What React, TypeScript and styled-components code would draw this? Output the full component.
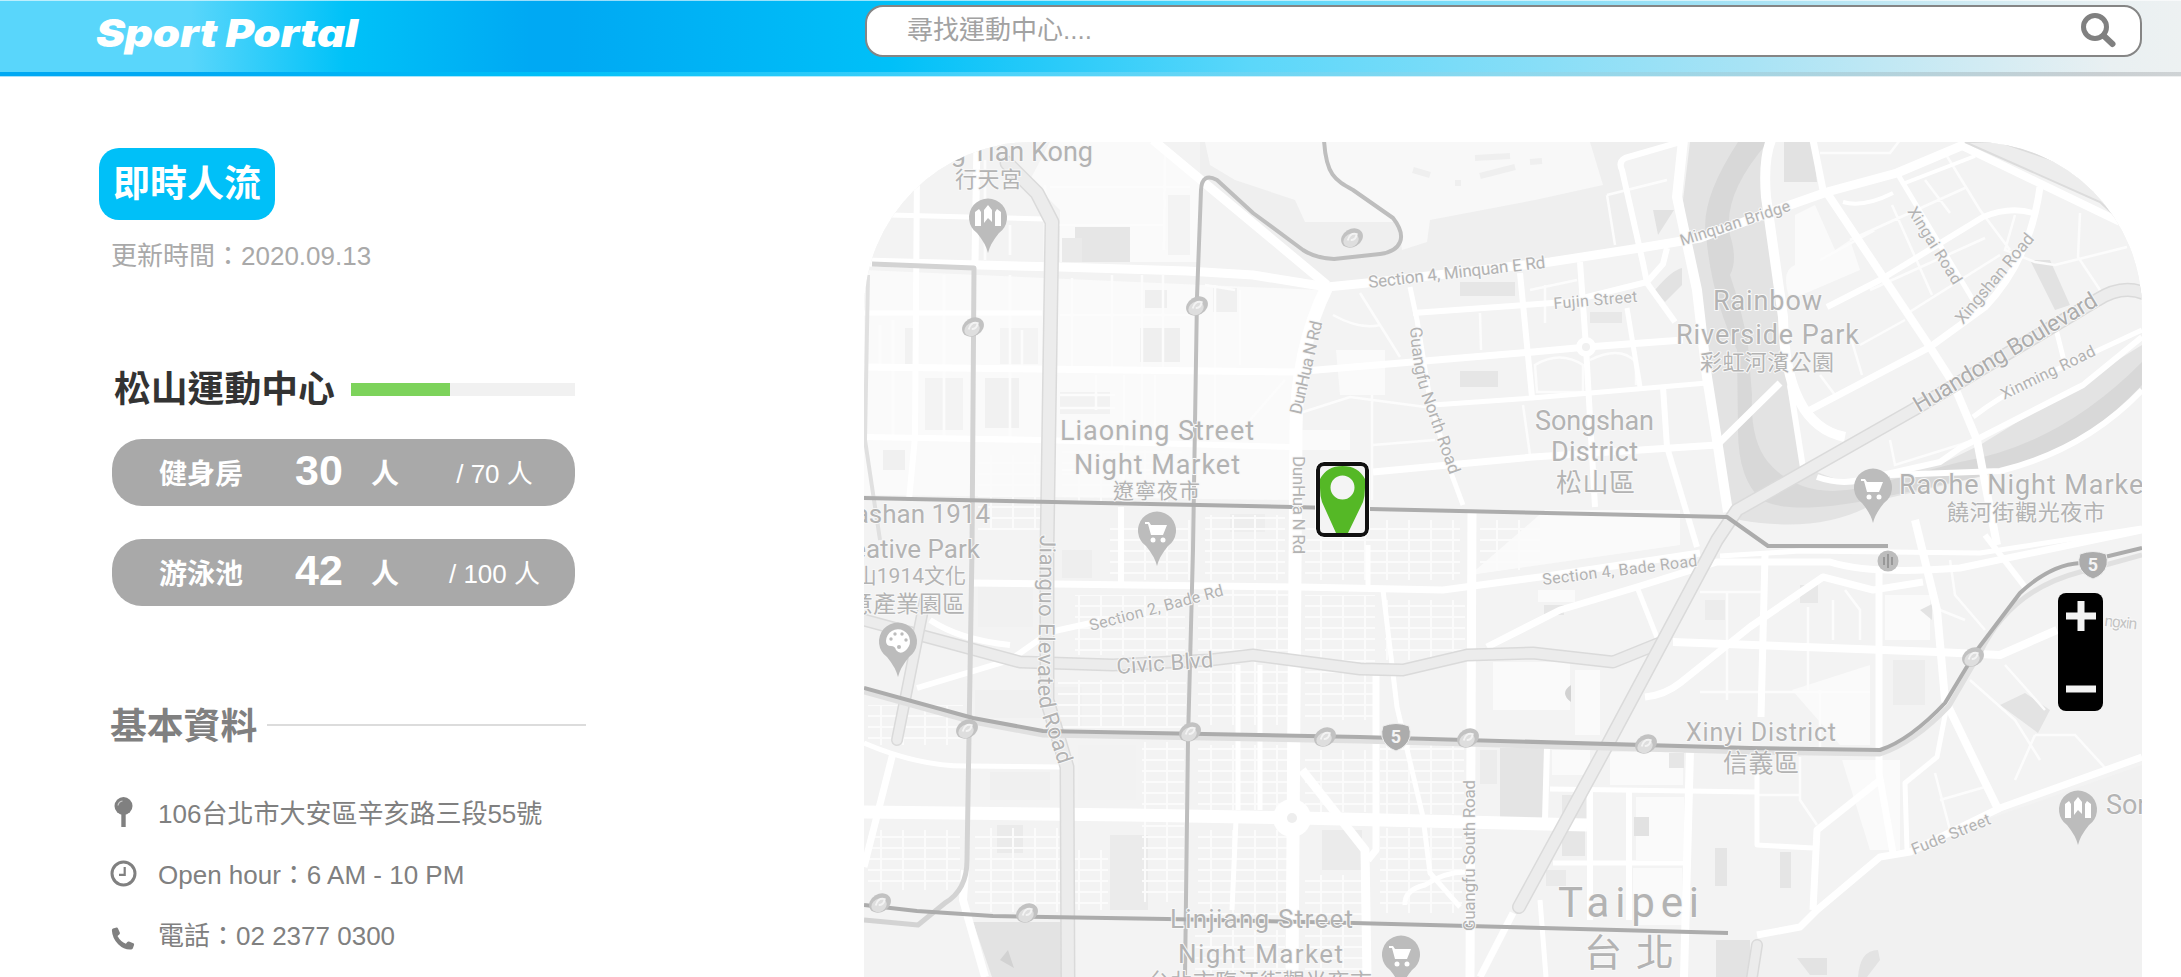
import React from 'react';
import styled, { createGlobalStyle } from 'styled-components';

const cjk = '"Liberation Sans", "Noto Sans CJK TC", sans-serif';

const GlobalStyle = createGlobalStyle`
  * { box-sizing: border-box; }
  body { margin: 0; background: #fff; font-family: ${cjk}; overflow: hidden; }
`;

const Page = styled.div`
  height: 977px;
  display: flex;
  flex-direction: column;
  overflow: hidden;
`;

const Header = styled.header`
  height: 77px;
  flex: none;
  display: flex;
  flex-direction: column;
  background: #fff;
`;

const HeaderBar = styled.div`
  height: 72px;
  display: flex;
  align-items: flex-start;
  padding: 5px 39px 0 96px;
  border-top: 1px solid rgba(255, 255, 255, 0.6);
  background: linear-gradient(90deg, #59d6fb 0, #59d6fb 190px, #00c2f8 345px, #00a9f3 530px, #00a9f3 570px, #00c0f8 890px, #5bd7fa 1250px, #a8e3f5 1750px, #e9f0f2 2110px, #edf1f2 100%);
`;

const HeaderRule = styled.div`
  height: 5px;
  border-bottom: 1px solid rgba(255, 255, 255, 0.65);
  background: linear-gradient(90deg, #00a9f3 0, #00a9f3 180px, #00c0f8 560px, #4cd3fa 1000px, #8bd9ef 1500px, #c9cfd2 2100px, #cfd3d5 100%);
`;

const Logo = styled.h1`
  margin: 4px 101px 0 0;
  width: 668px;
  font: italic 900 38px/46px Inter, "Liberation Sans", sans-serif;
  letter-spacing: -0.2px;
  color: #fff;
  transform: scaleX(1.15);
  transform-origin: left center;
`;

const SearchBox = styled.label`
  flex: 1;
  height: 52px;
  margin-top: -1px;
  display: flex;
  align-items: center;
  padding: 0 24px 0 40px;
  border: 2px solid #858585;
  border-radius: 18px;
  background: #fff;
`;

const SearchInput = styled.input`
  flex: 1;
  height: 40px;
  margin-top: -2px;
  padding: 0;
  border: 0;
  outline: 0;
  background: transparent;
  font: 26px/40px ${cjk};
  &::placeholder { color: #a2a2a2; opacity: 1; }
`;

const Main = styled.main`
  flex: 1;
  min-height: 0;
  display: flex;
  padding: 65px 39px 0 99px;
`;

const Sidebar = styled.aside`
  width: 765px;
  flex: none;
  padding-top: 6px;
`;

const Badge = styled.h2`
  margin: 0;
  width: 176px;
  height: 72px;
  border-radius: 20px;
  background: #00c0f8;
  color: #fff;
  font: 700 37px/74px ${cjk};
  text-align: center;
`;

const Updated = styled.p`
  margin: 16px 0 0 12px;
  font-size: 26px;
  line-height: 40px;
  color: #a9a9a9;
`;

const CenterRow = styled.div`
  display: flex;
  align-items: center;
  margin: 89px 0 0 15px;
  height: 50px;
`;

const CenterName = styled.h3`
  margin: 0;
  width: 237px;
  font: 700 36.8px/52px ${cjk};
  color: #333;
`;

const Progress = styled.div`
  width: 224px;
  height: 13px;
  margin-top: -2px;
  background: #f1f1f1;
`;

const ProgressFill = styled.div<{ $percent: number }>`
  width: ${(p) => p.$percent}%;
  height: 100%;
  background: #7dd35b;
`;

const CrowdCard = styled.div`
  display: flex;
  align-items: center;
  width: 463px;
  height: 67px;
  margin: 24px 0 33px 13px;
  padding-left: 47px;
  border-radius: 30px;
  background: #a9a9a9;
  color: #fff;
  & + & { margin-top: 0; }
`;

const Facility = styled.span`
  width: 136px;
  margin-top: -2px;
  font-size: 28px;
  font-weight: 700;
`;

const Count = styled.strong`
  width: 76px;
  font-size: 43px;
  line-height: 60px;
  margin-top: -5px;
`;

const Unit = styled.span`
  width: 55px;
  margin-top: -2px;
  font-size: 28px;
  font-weight: 700;
`;

const Capacity = styled.span`
  width: 137px;
  margin-top: -3px;
  text-align: center;
  font-size: 26px;
`;

const InfoHead = styled.div`
  display: flex;
  align-items: center;
  margin: 95px 0 0 11px;
  height: 52px;
`;

const InfoTitle = styled.h3`
  margin: 0;
  width: 157px;
  font: 700 36.8px/52px ${cjk};
  color: #808080;
`;

const Rule = styled.div`
  width: 319px;
  height: 2px;
  margin-top: -4px;
  background: #dcdcdc;
`;

const InfoList = styled.ul`
  margin: 28px 0 0 11px;
  padding: 0;
  list-style: none;
`;

const InfoItem = styled.li`
  display: flex;
  align-items: center;
  height: 61px;
  font-size: 26px;
  color: #808080;
`;

const IconSlot = styled.span<{ $drop?: number }>`
  width: 48px;
  height: 30px;
  display: flex;
  margin-top: ${(p) => p.$drop ?? 0}px;
`;

const MapFrame = styled.section`
  position: relative;
  width: 1278px;
  height: 835px;
  overflow: hidden;
  border-radius: 168px 168px 0 0;
  background: #f3f3f3;
`;

const MapMarker = styled.button`
  position: absolute;
  left: 452px;
  top: 320px;
  width: 53px;
  height: 75px;
  padding: 0;
  display: flex;
  border: 4px solid #111;
  border-radius: 8px;
  outline: 1px solid #fff;
  background: #f4f4f4;
`;

const ZoomControl = styled.div`
  position: absolute;
  left: 1194px;
  top: 451px;
  width: 45px;
  height: 118px;
  display: flex;
  flex-direction: column;
  justify-content: space-between;
  align-items: center;
  padding: 7px 0;
  border-radius: 8px;
  background: #000;
`;

const GlyphSvg = styled.svg`
  display: block;
`;

const SearchGlyph = () => (
  <GlyphSvg width="36" height="36" viewBox="0 0 36 36">
    <circle cx="15" cy="14" r="11.5" fill="none" stroke="#808080" strokeWidth="5" />
    <path d="M23.5 22.5 32.500 31" stroke="#808080" strokeWidth="6" strokeLinecap="round" />
  </GlyphSvg>
);

const PinGlyph = () => (
  <GlyphSvg width="27" height="30" viewBox="0 0 27 30">
    <circle cx="13.5" cy="9" r="9" fill="#808080" />
    <rect x="11.3" y="17" width="4.4" height="13" fill="#808080" />
    <path d="M8 8.5a5.5 5.5 0 0 1 4.5-4.5" stroke="#c8c8c8" strokeWidth="1.2" fill="none" />
  </GlyphSvg>
);

const ClockGlyph = () => (
  <GlyphSvg width="27" height="27" viewBox="0 0 27 27">
    <circle cx="13.5" cy="13.5" r="11.5" fill="none" stroke="#808080" strokeWidth="3" />
    <path d="M14.7 7v7.8H9" fill="none" stroke="#808080" strokeWidth="2.2" />
  </GlyphSvg>
);

const PhoneGlyph = () => (
  <GlyphSvg width="26" height="24" viewBox="0 0 26 24">
    <path
      d="M3 1.5 6.6.6Q7.6.5 8 1.4L9.9 5.700Q10.100 6.700 9.300 7.400L7.500 8.900Q10.600 14.600 15.900 16.700L17.300 15.100Q18 14.300 19 14.600L23.300 16.300Q24.300 16.800 24.100 17.700L23 21.100Q22.600 22.300 21.300 22.500 14.300 23.200 8.200 17.200 2.300 11.300 1.900 3.500 1.800 1.900 3 1.500Z"
      fill="#808080"
    />
  </GlyphSvg>
);

type Road = [string, number];

const streets: Road[] = [
  ['M864 262 L1060 267 L1187 271 L1253 275 L1327 287 L1367 283 L1550 262 L1640 248 L1700 238 L1790 205 L1827 192 L1897 173 L1975 140', 9],
  ['M1153 140 L1327 285', 9],
  ['M1327 287 Q1296 350 1296 430 L1292 977', 13],
  ['M864 367 L1293 372 L1533 352 L1587 347 L1683 340', 7],
  ['M864 437 L1040 440 L1292 447', 6],
  ['M864 313 H1042', 5],
  ['M890 215 L1044 219', 5],
  ['M917 170 L915 437 L909 500', 6],
  ['M977 140 L975 262', 7],
  ['M1373 472 L1533 457 L1717 445 L1780 383', 7],
  ['M1433 405 L1532 398 L1707 383', 5],
  ['M1413 313 L1567 302 L1647 282 L1663 264 L1667 248', 6],
  ['M1520 273 L1532 397', 6],
  ['M1580 262 L1586 347 L1595 507', 6],
  ['M1627 308 L1640 387', 5],
  ['M1663 387 L1667 447 L1697 547', 6],
  ['M1680 142 L1625 158 Q1618 162 1622 170 L1643 263 L1647 283 L1675 322', 6],
  ['M1410 287 L1417 320 L1430 400 L1450 470 L1463 505', 5],
  ['M1683 140 L1677 197 L1697 290 L1707 377 L1717 440 L1728 512', 10],
  ['M1827 193 L1930 347 L1953 383 L1977 440 L1987 493 L1997 545', 8],
  ['M1771 140 Q1763 160 1766 197 L1783 317 Q1785 425 1845 437', 10],
  ['M1790 385 L1803 468', 6],
  ['M1813 140 L1823 190', 7],
  ['M1810 410 L1930 347 L1985 307 Q2030 260 2040 187', 7],
  ['M1827 307 L1880 280 L1983 217 Q2010 206 2033 213', 6],
  ['M1897 173 L1973 300', 5],
  ['M1905 183 L1975 156', 4],
  ['M1843 202 Q1863 208 1893 193', 4],
  ['M1960 145 L2120 222', 8],
  ['M1973 417 Q2005 392 2045 375 L2142 330', 5],
  ['M1817 477 Q1840 485 1860 480 L1940 462 L1960 448 L2083 385 L2142 337', 6],
  ['M1890 475 L2000 471 Q2085 450 2142 390', 6],
  ['M2055 325 L2065 365', 5],
  ['M864 812 L1130 815 L1300 818 L1587 825', 13],
  ['M970 583 L1300 587 L1443 590 L1540 577 L1700 553', 7],
  ['M1472 510 L1470 977', 9],
  ['M1121 507 V583', 6],
  ['M1487 647 L1560 610 L1637 587 L1717 562 H1830 Q1870 575 1960 568 L2142 530', 7],
  ['M1720 556 L1800 551 L1980 553 L2142 528', 5],
  ['M1376 675 V850 L1368 860', 7],
  ['M1368 545 V587', 5],
  ['M1383 590 L1397 707 L1423 817 L1430 873 L1460 907', 5],
  ['M1302 770 L1365 850 L1367 977', 9],
  ['M1238 665 V810 M1260 665 V810 M1236 820 L1232 910', 5],
  ['M1547 747 L1545 820', 6],
  ['M1550 789 L1757 792', 5],
  ['M1553 863 H1683', 5],
  ['M1590 789 V920 M1629 789 V920', 6],
  ['M1690 750 L1684 977', 8],
  ['M1637 587 L1658 640', 5],
  ['M1645 697 Q1665 695 1680 683 L1750 627 L1823 577 L1873 590 L1923 582', 7],
  ['M1673 642 L1937 652 L2000 655 L2057 630', 8],
  ['M1765 555 L1761 717', 7],
  ['M1879 567 L1879 773 L1893 853', 7],
  ['M1915 520 L1937 610 L1945 700 L1997 807', 8],
  ['M1985 535 L2025 587', 6],
  ['M1948 700 L1937 757 L1905 783 L1907 850', 5],
  ['M2142 757 L2000 808 L1910 852 L1880 857 L1817 910 L1800 927 L1757 935', 7],
  ['M1880 780 L1817 830 L1813 910', 7],
  ['M1757 757 L1757 845 L1813 848', 5],
  ['M1513 913 L1480 977', 7],
  ['M965 870 L963 900 L985 977', 8],
  ['M893 753 L864 867', 7],
  ['M864 743 Q920 767 970 766 L1060 767', 5],
  ['M917 688 L1010 660 L1050 632 L1100 621', 6],
  ['M930 620 Q960 640 1010 645', 6],
  ['M1405 905 Q1404 890 1425 885 Q1445 872 1465 872', 5],
  ['M1540 900 L1546 977', 5],
];

const lanes =
  'M1892 205 L1932 295 M1925 180 L1950 213 M1945 153 L1980 210 L2010 250 M1850 240 L1965 188 M1870 290 L1985 238 M1908 313 L2000 255 M1820 260 L1875 230 ' +
  'M1850 335 L1862 375 M1820 375 L1835 395 M1860 345 L1905 320 M2015 215 L2005 250 L2035 262 L2055 265 L2127 247 M2080 213 L2078 257 L2100 290 ' +
  'M1820 153 H1890 L1900 140 M1607 195 L1667 180 M1607 195 L1615 245 M1360 293 L1400 357 M1333 315 Q1360 330 1380 325 M1480 313 L1481 350 M1372 395 V500 M1300 413 L1350 397 L1433 408 ' +
  'M1523 405 L1530 455 M1545 285 V323 M1530 290 L1577 280 M1373 445 L1435 440 M1535 365 Q1560 350 1583 365 V392 H1537 Z M1590 360 Q1620 345 1636 362 V385 M1890 440 L1895 465 L1975 440 ' +
  'M1700 592 H1765 M1727 592 V700 M1700 692 H1870 M1808 607 V690 M1833 600 V640 M1845 590 L1860 610 V640 M1820 690 V750 M1950 560 L1955 595 L1985 630 M1970 680 L2015 720 L2040 760 M2005 665 L2045 710 M2035 735 H2075 L2107 770 M2035 735 L2015 780 ' +
  'M1940 800 L1985 787 M1940 610 L1965 620 M1935 773 L1950 830 M1800 757 V800 L1817 825 M1758 795 H1800 M1045 185 V280 M1165 150 L1164 250 M1050 225 H1165 M1050 187 H1190 M985 160 V260 M1010 225 V255 ' +
  'M880 325 V367 M893 320 V437 M944 275 V437 M1010 275 V437 M1022 330 V367 M1072 278 V367 M1112 275 V370 M1142 275 V440 M1163 275 V370 M1215 285 V440 M1240 290 V365 M1060 315 H1190 M1060 395 H1115 M1060 408 H1115 M1096 375 V410 M1124 375 V505 M1155 375 V440 M1205 285 L1235 290 M1250 420 L1285 380 M1062 470 H1190';

const blocks: [number, number, number, number, string][] = [
  [1075, 227, 55, 35, '#e6e6e6'], [1062, 238, 20, 24, '#eaeaea'], [1145, 290, 22, 18, '#efefef'],
  [1140, 328, 40, 34, '#efefef'], [1213, 288, 24, 24, '#f0f0f0'], [925, 378, 38, 52, '#f3f3f3'],
  [985, 378, 34, 50, '#f1f1f1'], [1000, 328, 38, 36, '#f4f4f4'], [905, 328, 10, 36, '#f2f2f2'],
  [883, 450, 22, 20, '#f0f0f0'], [1060, 392, 50, 22, '#f2f2f2'], [1168, 195, 22, 60, '#f3f3f3'],
  [1460, 282, 55, 14, '#e6e6e6'], [1460, 371, 38, 16, '#e6e6e6'], [1590, 312, 32, 11, '#e8e8e8'],
  [1230, 514, 35, 18, '#eeeeee'], [1062, 550, 30, 28, '#eeeeee'], [978, 585, 55, 42, '#f1f1f1'],
  [975, 690, 68, 28, '#f0f0f0'], [1050, 687, 32, 42, '#f1f1f1'], [990, 772, 60, 28, '#f0f0f0'],
  [1078, 745, 58, 55, '#f2f2f2'], [1110, 835, 38, 75, '#ebebeb'], [997, 825, 26, 28, '#ebebeb'],
  [1322, 830, 40, 40, '#ebebeb'], [1500, 748, 44, 70, '#e4e4e4'], [1480, 750, 17, 34, '#ececec'],
  [1562, 795, 24, 26, '#e8e8e8'], [1562, 831, 23, 25, '#e6e6e6'], [1669, 753, 15, 15, '#e6e6e6'],
  [1634, 817, 15, 19, '#e2e2e2'], [1715, 848, 12, 38, '#e5e5e5'], [1780, 852, 11, 36, '#e5e5e5'],
  [1716, 940, 34, 37, '#e3e3e3'], [1544, 605, 20, 10, '#e6e6e6'], [1893, 660, 32, 45, '#ededed'],
  [1800, 585, 18, 18, '#e8e8e8'], [1705, 600, 20, 20, '#ececec'], [1546, 870, 20, 16, '#eaeaea'],
];

const grids: [number, number, number, number][] = [
  [1058, 680, 128, 48], [1142, 742, 42, 160], [868, 830, 92, 60], [975, 828, 88, 84], [1072, 850, 36, 60],
  [1198, 590, 90, 135], [1198, 745, 90, 65], [1198, 830, 90, 85], [1305, 595, 70, 125], [1305, 750, 68, 62],
  [1380, 740, 84, 74], [1385, 600, 80, 60], [1380, 828, 82, 85], [868, 705, 95, 40], [978, 455, 64, 75],
  [1062, 450, 120, 52], [1305, 520, 155, 60], [1110, 520, 80, 60], [1205, 515, 80, 65], [1305, 875, 60, 95], [1075, 595, 110, 60],
  [1480, 520, 60, 50], [1195, 930, 90, 45],
];

const stations: [number, number][] = [
  [973, 327], [1197, 306], [1352, 238], [967, 729], [1190, 732], [1325, 737],
  [1468, 738], [1646, 744], [1973, 657], [880, 903], [1027, 913],
];

interface LabelSpec {
  t: string;
  x: number;
  y: number;
  s: number;
  w?: number;
  r?: number;
  end?: boolean;
  c?: string;
}

const labels: LabelSpec[] = [
  { t: 'Hsing Tian Kong', x: 1093, y: 161, s: 27, end: true },
  { t: '行天宮', x: 955, y: 187, s: 22, w: 67 },
  { t: 'Liaoning Street', x: 1060, y: 440, s: 27, w: 194 },
  { t: 'Night Market', x: 1074, y: 474, s: 27, w: 166 },
  { t: '遼寧夜市', x: 1113, y: 498, s: 21, w: 87 },
  { t: 'Huashan 1914', x: 990, y: 523, s: 26, end: true },
  { t: 'Creative Park', x: 980, y: 558, s: 26, end: true },
  { t: '華山1914文化', x: 966, y: 583, s: 21, end: true },
  { t: '創意產業園區', x: 965, y: 612, s: 23, end: true },
  { t: 'Songshan', x: 1535, y: 430, s: 27, w: 119 },
  { t: 'District', x: 1551, y: 461, s: 27, w: 87 },
  { t: '松山區', x: 1556, y: 492, s: 26, w: 79 },
  { t: 'Rainbow', x: 1713, y: 310, s: 27, w: 109 },
  { t: 'Riverside Park', x: 1676, y: 344, s: 27, w: 183 },
  { t: '彩虹河濱公園', x: 1700, y: 370, s: 22, w: 134 },
  { t: 'Raohe Night Market', x: 1899, y: 494, s: 27, w: 254 },
  { t: '饒河街觀光夜市', x: 1947, y: 520, s: 22, w: 158 },
  { t: 'Linjiang Street', x: 1170, y: 928, s: 26, w: 183 },
  { t: 'Night Market', x: 1178, y: 963, s: 26, w: 165 },
  { t: '台北市臨江街觀光夜市', x: 1148, y: 989, s: 22, w: 224 },
  { t: 'Taipei', x: 1558, y: 917, s: 42, w: 141 },
  { t: '台北', x: 1584, y: 966, s: 38, w: 90 },
  { t: 'Xinyi District', x: 1686, y: 741, s: 25, w: 150 },
  { t: '信義區', x: 1723, y: 772, s: 25, w: 76 },
  { t: 'Civic Blvd', x: 1117, y: 674, s: 22, w: 97, r: -4 },
  { t: 'Section 2, Bade Rd', x: 1091, y: 631, s: 16, w: 138, r: -15 },
  { t: 'Section 4, Bade Road', x: 1543, y: 585, s: 16, w: 156, r: -7 },
  { t: 'Section 4, Minquan E Rd', x: 1369, y: 288, s: 17, w: 178, r: -6.5 },
  { t: 'Fujin Street', x: 1554, y: 309, s: 16, w: 84, r: -5 },
  { t: 'Minquan Bridge', x: 1682, y: 246, s: 16, w: 115, r: -18 },
  { t: 'Xingai Road', x: 1907, y: 211, s: 16, w: 88, r: 58 },
  { t: 'Xingshan Road', x: 1963, y: 325, s: 17, w: 112, r: -50 },
  { t: 'Huandong Boulevard', x: 1919, y: 413, s: 23, w: 210, r: -31, c: '#acacac' },
  { t: 'Xinming Road', x: 2004, y: 400, s: 16, w: 103, r: -26 },
  { t: 'Fude Street', x: 1914, y: 855, s: 16, w: 84, r: -22 },
  { t: 'DunHua N Rd', x: 1301, y: 415, s: 17, w: 95, r: -77 },
  { t: 'DunHua N Rd', x: 1293, y: 456, s: 17, w: 98, r: 90 },
  { t: 'Guangfu South Road', x: 1475, y: 931, s: 17, w: 151, r: -90 },
  { t: 'ngxin', x: 2104, y: 626, s: 16, w: 33, r: 6, c: '#c4c4c4' },
  { t: 'Songshan', x: 2106, y: 814, s: 27, w: 119 },
];

const MapText = styled.text`
  font-family: Roboto, "Noto Sans CJK TC", sans-serif;
  fill: #b3b3b3;
  stroke: #f8f8f8;
  stroke-width: 2px;
  stroke-linejoin: round;
  paint-order: stroke;
`;

const Label = ({ t, x, y, s, w, r, end, c }: LabelSpec) => (
  <MapText
    x={x}
    y={y}
    fontSize={s}
    textLength={w}
    textAnchor={end ? 'end' : 'start'}
    transform={r ? `rotate(${r} ${x} ${y})` : undefined}
    style={c ? { fill: c } : undefined}
  >
    {t}
  </MapText>
);

type PoiKind = 'temple' | 'cart' | 'art';

const Poi = ({ x, y, kind }: { x: number; y: number; kind: PoiKind }) => (
  <g transform={`translate(${x} ${y})`}>
    <path d="M0 36 Q-2 27-11 16 A19 19 0 1 1 11 16 Q2 27 0 36Z" fill="#bcbcbc" />
    {kind === 'temple' && (
      <path d="M-13-5 L-9-8 L-7-5 V9 H-13Z M7-5 L9-8 L13-5 V9 H7Z M-4-7 L0-12 L4-7 V5 L0 1 L-4 6Z" fill="#fff" />
    )}
    {kind === 'cart' && (
      <g fill="#fff">
        <path d="M-12-8 H-8 L-6-5 H10 L6 5 H-6 L-9-6 H-12Z" />
        <circle cx="-4" cy="10" r="2.500" />
        <circle cx="6" cy="10" r="2.500" />
      </g>
    )}
    {kind === 'art' && (
      <g>
        <path d="M-12 0 A12 12 0 1 1 7 10 Q2 14-2 9 Q-3 5-7 5 Q-12 5-12 0Z" fill="#fff" />
        <g fill="#bcbcbc">
          <circle cx="-7" cy="-2" r="1.700" />
          <circle cx="-3" cy="-7" r="1.700" />
          <circle cx="4" cy="-7" r="1.700" />
          <circle cx="8" cy="-1" r="1.700" />
          <circle cx="1" cy="6" r="2" />
        </g>
      </g>
    )}
  </g>
);

const Shield = ({ x, y }: { x: number; y: number }) => (
  <g transform={`translate(${x} ${y})`}>
    <path d="M-13-10 Q0-15 13-10 Q15-4 14 1 Q11 11 0 15 Q-11 11-14 1 Q-15-4-13-10Z" fill="#acacac" stroke="#efefef" strokeWidth="1" />
    <text x="0" y="7" fontFamily="Roboto" fontWeight="700" fontSize="18" textAnchor="middle" fill="#f4f4f4">5</text>
  </g>
);

const Elevated = ({ d, w }: { d: string; w: number }) => (
  <g fill="none" strokeLinejoin="round" strokeLinecap="round">
    <path d={d} stroke="#dadada" strokeWidth={w} />
    <path d={d} stroke="#ececec" strokeWidth={w - 3} />
  </g>
);

const CityMap = () => (
  <GlyphSvg width="1278" height="835" viewBox="864 142 1278 835">
    <defs>
      <pattern id="lanes" width="22" height="11" patternUnits="userSpaceOnUse">
        <path d="M0 1 H22 M1 0 V11" stroke="#fbfbfb" strokeWidth="2" />
      </pattern>
      <path id="jianguo" d="M1040 535 L1038 690 Q1039 710 1047 730 L1062 775" />
      <path id="guangfu" d="M1410 327 Q1413 375 1425 405 L1455 490" />
    </defs>
    <rect x="864" y="142" width="1278" height="835" fill="#f3f3f3" />
    <path d="M1050 142 H1153 L1200 182 V262 H1060 V210 L1030 180Z M864 270 L1320 290 L1296 400 V500 L864 495Z" fill="#fafafa" />
    <path d="M1200 142 H1680 L1620 160 L1640 250 L1367 281 L1325 283 L1200 180Z" fill="#efefef" />
    <path d="M1205 142 H1590 L1603 185 L1535 200 L1430 220 L1427 242 L1402 250 L1398 222 H1305 L1295 200 L1235 180 L1210 165Z" fill="#f8f8f8" />
    <path d="M1413 170 L1430 175 M1475 158 L1510 156 M1480 176 L1515 167 M1530 162 L1542 161 M1455 183 h6" stroke="#efefef" strokeWidth="6" />
    <path d="M1545 510 H1680 V545 L1470 575Z M1493 662 H1570 V710 H1493Z M1575 670 H1600 V735 H1575Z M1552 750 H1590 V775 H1552Z M1610 752 H1683 V785 H1610Z M1636 797 H1684 V860 H1636Z M1633 868 H1682 V925 H1633Z M1538 590 H1575 V602 H1538Z M1885 595 H1930 V640 H1885Z M1792 690 L1870 665 V745 L1840 745Z M1842 760 L1900 760 V850 L1870 850Z M1336 350 H1385 V395 H1340Z M1300 430 H1350 V450 H1300Z" fill="#fafafa" />
    <path d="M1795 215 L1815 205 L1835 250 L1850 240 L1860 270 L1790 300 Q1780 270 1795 265Z" fill="#fafafa" />
    <path d="M1757 935 L1800 927 L1880 857 L2142 765 V977 H1757Z" fill="#f1f1f1" />

    <path d="M1690 142 H1767 L1763 190 L1783 317 L1787 385 L1802 465 Q1860 495 1890 472 L1945 462 L1980 445 L2142 345 V392 Q2090 445 2010 470 L1880 500 Q1825 535 1740 520 L1730 510 L1712 400 L1695 280 L1683 200Z" fill="#e3e3e3" />
    <path d="M1738 142 H1768 Q1722 195 1730 235 Q1738 260 1730 275 Q1742 310 1748 345 L1752 395 Q1750 440 1768 462 Q1800 500 1860 488 L1960 462 Q2060 445 2142 362 V385 Q2080 450 2010 470 L1870 500 Q1790 515 1762 500 Q1738 480 1738 430 L1737 350 Q1712 300 1706 235 Q1700 200 1738 142Z" fill="#d8d8d8" />
    <path d="M1784 142 H1812 L1817 182 H1784Z M1653 210 H1674 L1658 235Z M1655 290 Q1672 270 1682 268 V285 L1665 302Z M2030 260 H2050 L2070 305 L2055 310Z" fill="#e2e2e2" />

    {blocks.map(([x, y, w, h, fill]) => (
      <rect key={`${x}-${y}`} x={x} y={y} width={w} height={h} fill={fill} />
    ))}
    <path d="M973 922 H1062 V977 H992Z M2000 705 L2025 693 L2050 710 L2038 733Z M1920 610 L1932 604 V620Z M1797 958 H1827 V975 H1810Z M1858 977 Q1860 950 1878 950 L1880 960 L1867 977Z" fill="#e3e3e3" />
    <path d="M1571 685 Q1559 693 1571 702Z M1000 960 L1008 950 L1014 968Z" fill="#d2d2d2" />
    {grids.map(([x, y, w, h]) => (
      <rect key={`${x}-${y}`} x={x} y={y} width={w} height={h} fill="url(#lanes)" />
    ))}

    <path d={lanes} fill="none" stroke="#fcfcfc" strokeWidth="2.500" />
    <g fill="none" stroke="#fff" strokeLinejoin="round">
      {streets.map(([d, w]) => (
        <path key={d} d={d} strokeWidth={w} />
      ))}
    </g>
    <circle cx="1292" cy="818" r="19" fill="#fff" />
    <circle cx="1292" cy="818" r="5" fill="#eeeeee" />
    <circle cx="1586" cy="347" r="10" fill="#fff" />
    <circle cx="1586" cy="347" r="4" fill="#f1f1f1" />

    <path d="M1965 142 L2100 202 L2112 213 L2128 230 L2110 180 L2000 142Z" fill="#ededed" stroke="#dcdcdc" strokeWidth="2" />
    <Elevated d="M864 620 L927 637 L1020 662 L1113 665 L1210 660 L1253 655 L1360 669 L1403 670 L1467 655 L1533 653 L1613 662 L1660 643" w={13} />
    <Elevated d="M925 600 L897 740" w={12} />
    <Elevated d="M1007 163 L1037 193 L1052 222 L1047 550 L1047 700 L1067 767 L1068 990" w={15} />
    <Elevated d="M2150 296 Q2125 282 2097 300 L1913 410 L1737 510 L1717 540 L1610 740 L1519 907" w={14} />
    <Elevated d="M1750 990 L1757 945" w={12} />

    <g fill="none" strokeLinejoin="round">
      <path d="M872 264 L974 268 L972 550 L967 860 Q967 890 945 903 L918 925 L864 920" stroke="#d3d3d3" strokeWidth="5" />
      <path d="M868 275 L865 440 L880 540" stroke="#e0e0e0" strokeWidth="4" />
      <path d="M1324 140 C1326 175 1335 180 1353 190 L1393 218 Q1404 232 1400 242 Q1396 252 1380 254 L1334 259 Q1315 258 1303 250 L1253 213 L1217 180 Q1202 172 1201 190 L1197 297 L1193 550 L1188 740 L1185 977" stroke="#bebebe" strokeWidth="4" />
      <path d="M864 692 L973 722 L1043 735 L1360 741 L1750 752 L1880 754 Q1915 742 1949 706 L1980 653 Q2010 590 2080 572 L2142 555" stroke="#e0e0e0" strokeWidth="5" />
      <g stroke="#acacac" strokeWidth="4">
        <path d="M864 498 L1293 507 L1370 509 L1727 517 L1768 546 L1888 546" />
        <path d="M864 688 L973 718 L1043 731 L1360 737 L1750 748 L1880 750 Q1910 740 1945 703 L1977 650 L2020 593 Q2050 565 2080 563 L2142 548" />
        <path d="M864 905 L917 911 L993 916 L1167 919 L1353 923 L1728 933" />
      </g>
    </g>

    {stations.map(([x, y]) => (
      <g key={`${x}-${y}`} transform={`translate(${x} ${y}) rotate(-30)`}>
        <ellipse rx="11.500" ry="9" fill="#c2c2c2" />
        <ellipse cx="-2" cy="1.500" rx="8" ry="6.500" fill="#dedede" />
        <path d="M-5 0 Q1-6 6-1 Q2 4-2 1" fill="none" stroke="#f3f3f3" strokeWidth="2" />
      </g>
    ))}
    <circle cx="1888" cy="561" r="10.500" fill="#bdbdbd" />
    <path d="M1888 554 V568 M1884 557 V565 M1892 557 V565" stroke="#989898" strokeWidth="2" />

    {labels.map((l) => (
      <Label key={`${l.t}-${l.x}`} {...l} />
    ))}
    <MapText fontSize="22"><textPath href="#jianguo" textLength="233">Jianguo Elevated Road</textPath></MapText>
    <MapText fontSize="17"><textPath href="#guangfu" textLength="154">Guangfu North Road</textPath></MapText>

    <Poi x={988} y={217} kind="temple" />
    <Poi x={1157} y={530} kind="cart" />
    <Poi x={1873} y={487} kind="cart" />
    <Poi x={898} y={641} kind="art" />
    <Poi x={1401} y={954} kind="cart" />
    <Poi x={2078} y={809} kind="temple" />
    <Shield x={1396} y={736} />
    <Shield x={2093} y={564} />
  </GlyphSvg>
);

const facilities = [
  { name: '健身房', count: 30, capacity: 70 },
  { name: '游泳池', count: 42, capacity: 100 },
];

const contacts = [
  { icon: <PinGlyph />, drop: 1, text: '106台北市大安區辛亥路三段55號' },
  { icon: <ClockGlyph />, drop: 5, text: 'Open hour：6 AM - 10 PM' },
  { icon: <PhoneGlyph />, drop: 17, text: '電話：02 2377 0300' },
];

export default function App() {
  return (
    <Page>
      <GlobalStyle />
      <Header>
        <HeaderBar>
          <Logo>Sport Portal</Logo>
          <SearchBox>
            <SearchInput placeholder="尋找運動中心...." />
            <SearchGlyph />
          </SearchBox>
        </HeaderBar>
        <HeaderRule />
      </Header>
      <Main>
        <Sidebar>
          <Badge>即時人流</Badge>
          <Updated>更新時間：2020.09.13</Updated>
          <CenterRow>
            <CenterName>松山運動中心</CenterName>
            <Progress><ProgressFill $percent={44} /></Progress>
          </CenterRow>
          {facilities.map((f) => (
            <CrowdCard key={f.name}>
              <Facility>{f.name}</Facility>
              <Count>{f.count}</Count>
              <Unit>人</Unit>
              <Capacity>/ {f.capacity} 人</Capacity>
            </CrowdCard>
          ))}
          <InfoHead>
            <InfoTitle>基本資料</InfoTitle>
            <Rule />
          </InfoHead>
          <InfoList>
            {contacts.map((c) => (
              <InfoItem key={c.text}>
                <IconSlot $drop={c.drop}>{c.icon}</IconSlot>
                {c.text}
              </InfoItem>
            ))}
          </InfoList>
        </Sidebar>
        <MapFrame>
          <CityMap />
          <MapMarker aria-label="松山運動中心">
            <GlyphSvg width="45" height="67" viewBox="0 0 45 67">
              <path fillRule="evenodd" d="M16 67 L2 36 Q0 30 0 22 V13 Q7 0 22.500 0 Q38 0 45 13 V22 Q45 30 43 36 L28 67Z M22.500 9.500 A12 12 0 1 0 22.500 33.500 A12 12 0 1 0 22.500 9.500Z" fill="#55b826" />
            </GlyphSvg>
          </MapMarker>
          <ZoomControl>
            <GlyphSvg width="32" height="32" viewBox="0 0 32 32">
              <path d="M16 1 V31 M1 16 H31" stroke="#f3f3f3" strokeWidth="7" />
            </GlyphSvg>
            <GlyphSvg width="32" height="32" viewBox="0 0 32 32">
              <path d="M1 17 H31" stroke="#f3f3f3" strokeWidth="7" />
            </GlyphSvg>
          </ZoomControl>
        </MapFrame>
      </Main>
    </Page>
  );
}
